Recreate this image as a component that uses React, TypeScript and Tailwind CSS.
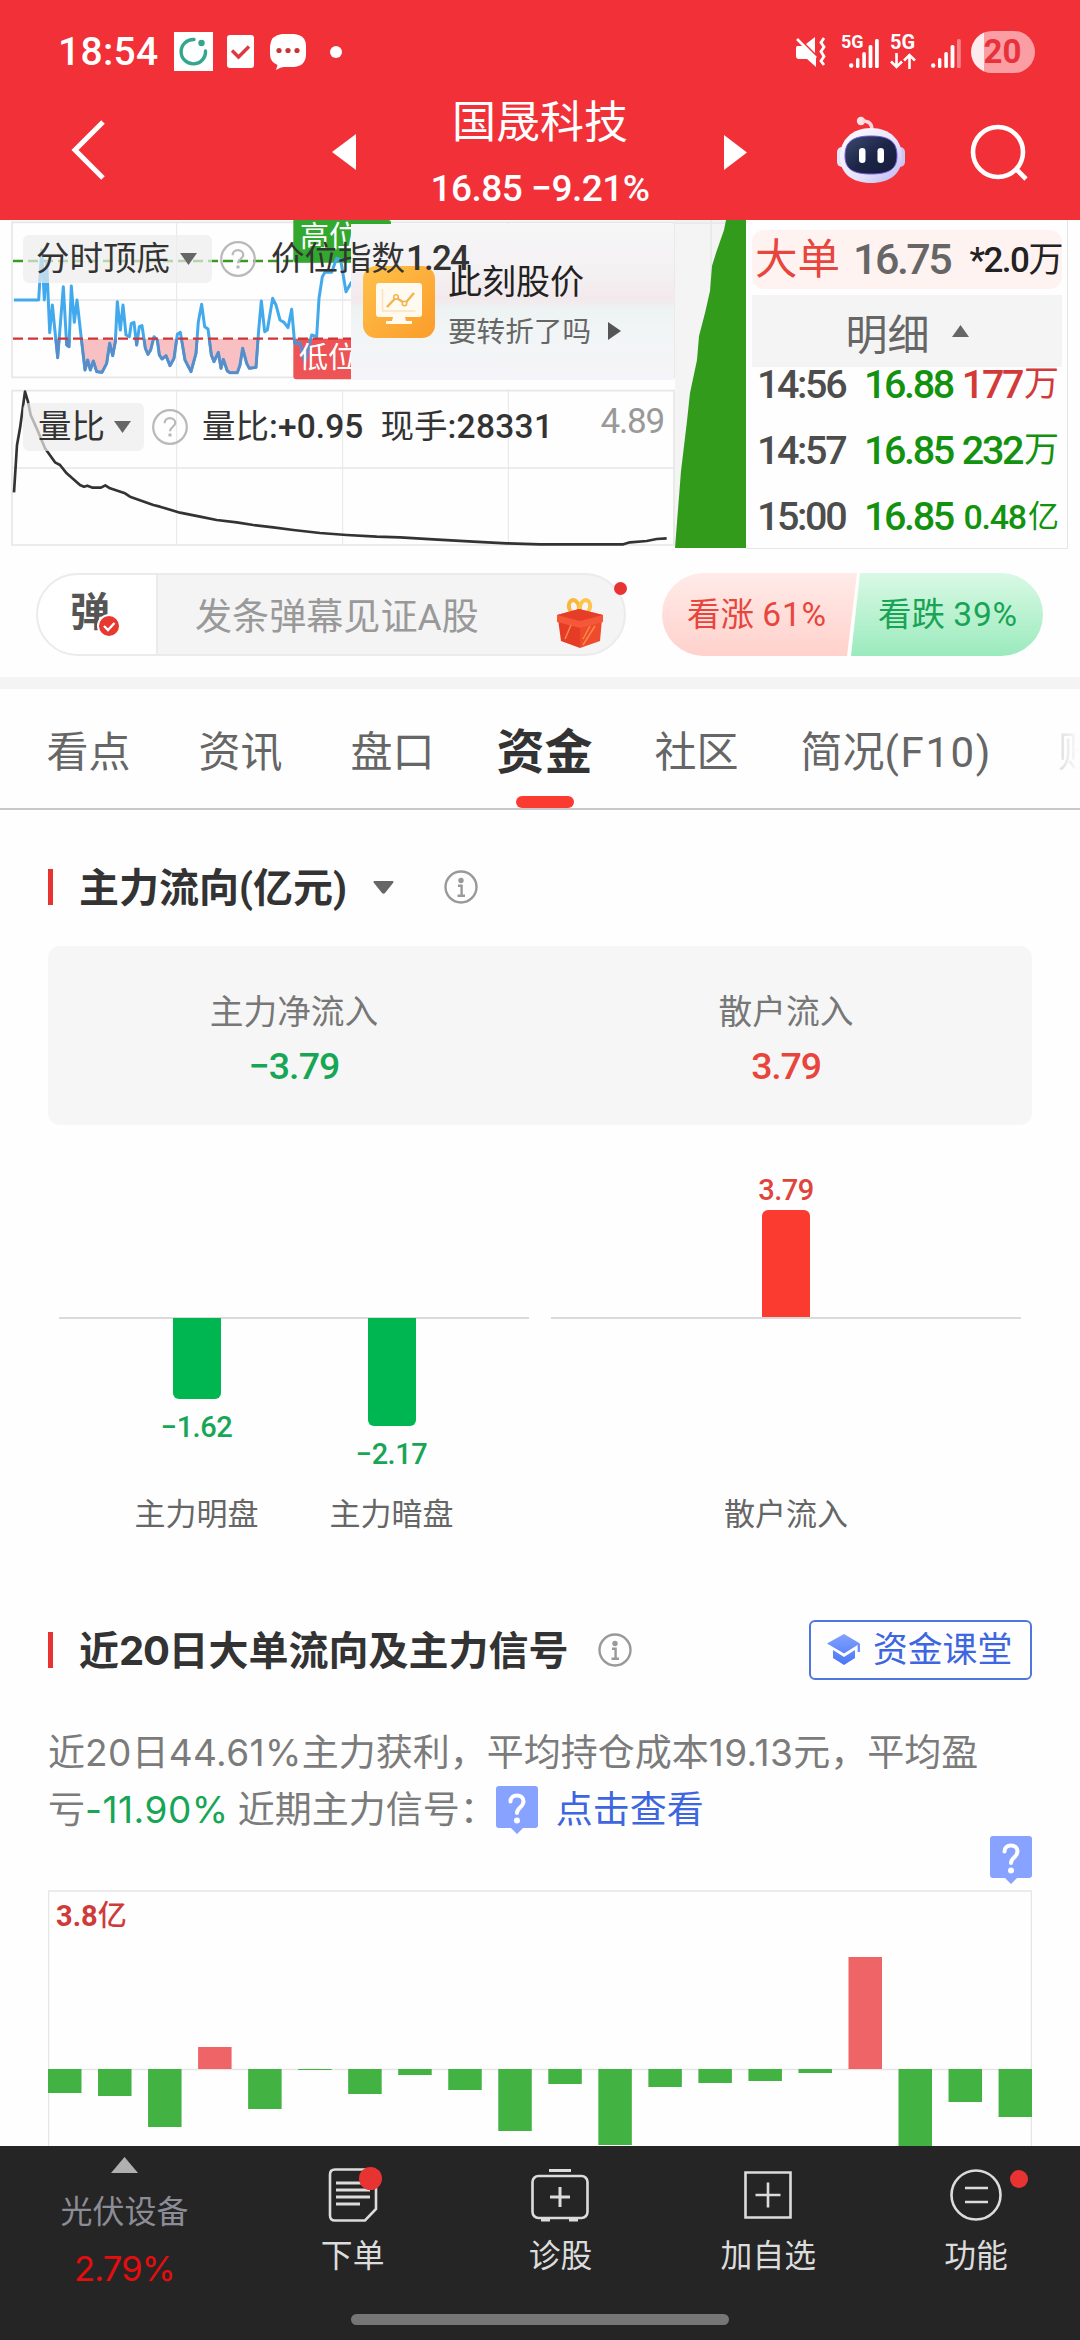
import { clsx } from "clsx";

const indexLine =
  "42,255 116,255 125,105 133,255 140,140 149,353 157,270 173,428 190,215 200,390 207,395 214,213 223,322 231,255 245,380 255,465 263,435 271,465 280,438 290,470 306,472 320,445 329,385 338,422 346,380 352,260 361,345 369,270 378,360 388,365 394,325 402,322 410,390 418,335 426,332 436,400 444,418 452,405 462,365 472,375 478,420 486,432 498,422 510,452 522,430 532,358 541,352 555,435 573,470 588,415 595,320 605,268 614,335 624,342 634,420 642,440 655,412 663,460 670,433 682,468 690,473 712,473 720,450 728,400 740,445 748,460 768,457 776,345 784,258 794,350 802,345 818,250 828,270 840,315 852,322 864,338 875,283 884,385 900,383 915,440 935,360 950,365 957,250 967,185 975,172 995,172 1010,130 1022,135 1038,230 1055,200";

const ratioLine =
  "42,832 51,690 60,640 75,530 84,560 92,600 110,640 135,700 165,742 180,750 200,775 240,810 252,815 262,812 278,818 303,818 316,811 330,820 375,835 390,845 460,870 480,875 540,893 600,905 650,915 710,922 760,930 820,937 880,945 960,954 1040,960 1130,965 1200,967 1300,973 1420,980 1520,985 1620,988 1870,988 1890,982 1940,978 1970,972 2000,970";

const trades = [
  { time: "14:56", price: "16.88", amount: "177万", up: true },
  { time: "14:57", price: "16.85", amount: "232万", up: false },
  { time: "15:00", price: "16.85", amount: "0.48亿", up: false, small: true },
];

// positive = inflow (red), negative = outflow (green)
const flows = [-24, -27, -58, 22, -40, -1, -25, -6, -21, -62, -15, -76, -18, -14, -12, -4, 112, -90, -33, -48];

function QuestionCircle() {
  return (
    <svg width="36" height="36" viewBox="0 0 36 36" fill="none" className="shrink-0">
      <circle cx="18" cy="18" r="16.8" stroke="#b9b9b9" strokeWidth="2.2" />
      <path d="M12.6 14.2c0-3 2.2-5 5.3-5s5.4 1.900 5.400 4.700c0 3.600-5.200 4.200-5.200 8.300" stroke="#b9b9b9" strokeWidth="2.200" />
      <circle cx="18" cy="26" r="1.800" fill="#b9b9b9" />
    </svg>
  );
}

function InfoIcon() {
  return (
    <svg width="34" height="34" viewBox="0 0 34 34" fill="none" className="shrink-0">
      <circle cx="17" cy="17" r="15.500" stroke="#999" strokeWidth="2.400" />
      <circle cx="17" cy="10.500" r="2.700" fill="#999" />
      <path d="M14 15.800h3.600v9.700M13.500 25.700h7.500" stroke="#999" strokeWidth="2.400" />
    </svg>
  );
}

function SignalBubble({ className }: { className?: string }) {
  return (
    <svg width="42" height="48" viewBox="0 0 42 48" fill="none" className={clsx("shrink-0", className)}>
      <path d="M3 0h36q3 0 3 3v36q0 3-3 3H27l-6 6-6-6H3q-3 0-3-3V3q0-3 3-3z" fill="#87a3ff" />
      <path d="M14.500 15.500c0-4 2.800-6 6.500-6s6.500 2.200 6.500 6c0 5.400-6.500 6.300-6.500 11.500" stroke="#fff" strokeWidth="4" strokeLinecap="round" />
      <circle cx="21" cy="34.500" r="3" fill="#fff" />
    </svg>
  );
}

function StatusBar() {
  return (
    <div className="flex h-[94px] items-center pt-[9px] pl-[58px]">
      <span className="w-[116px] text-[39px] leading-[40px] font-medium tracking-[0.3px]">18:54</span>
      <svg width="40" height="40" viewBox="0 0 40 40">
        <path d="M0 0h39v39H0z" fill="#fff" />
        <path d="M20 7.500A12.200 12.200 0 1 0 31.500 19" fill="none" stroke="#35a58d" strokeWidth="3.400" strokeLinecap="round" />
        <circle cx="27.500" cy="11" r="3.200" fill="#35a58d" />
      </svg>
      <svg className="ml-[13px]" width="27" height="33" viewBox="0 0 27 33">
        <rect width="27" height="33" rx="3" fill="#fff" />
        <path d="M5 15.500l6.500 6.500L22 11.500" fill="none" stroke="#dc3a40" strokeWidth="3.400" />
      </svg>
      <svg className="ml-[16px]" width="36" height="36" viewBox="0 0 36 36">
        <path d="M12 0h12q12 1 12 12v8q0 12-12 13H14q-3 0-8 3l1.500-5Q0 28 0 20v-8Q1 1 12 0z" fill="#fff" />
        <circle cx="9" cy="16.500" r="2.600" fill="#c33" />
        <circle cx="18" cy="16.500" r="2.600" fill="#c33" />
        <circle cx="27" cy="16.500" r="2.600" fill="#c33" />
      </svg>
      <span className="ml-[24px] size-[12px] rounded-full bg-white" />

      <svg className="ml-auto" width="32" height="30" viewBox="0 0 32 30" fill="none">
        <path d="M20 0v16l-9-9zM2 9h7l12 12v9l-9-8H4q-3 0-3-3v-7q0-3 1-3z" fill="#fff" />
        <path d="M2 2l19 19" stroke="#fff" strokeWidth="2.600" />
        <path d="M29 1l-3 4.500 3 4.500-3 4.500 3 5-3 4.500 3 4" stroke="#fff" strokeWidth="2.800" />
      </svg>
      <div className="relative ml-[14px] h-[34px] w-[40px]">
        <span className="absolute top-0 left-0 text-[18px] leading-[14px] font-bold">5G</span>
        <SignalBars className="absolute bottom-[1px] left-[8px]" />
      </div>
      <div className="ml-[8px] flex h-[34px] w-[27px] flex-col items-center justify-between">
        <span className="text-[20px] leading-[15px] font-bold">5G</span>
        <svg width="26" height="16" viewBox="0 0 26 16" fill="none" stroke="#fff" strokeWidth="2.600">
          <path d="M6.500 0v14M1 8.500l5.500 5.500 5.500-5.500M19.500 16V2M14 7.500L19.500 2 25 7.500" />
        </svg>
      </div>
      <SignalBars className="mt-[4px] ml-[15px]" weak />
      <div className="mr-[45px] ml-[10px] flex h-[42px] w-[64px] items-center justify-center rounded-full bg-[linear-gradient(90deg,#fdeced_20%,#fa9ea3_20%)] pr-[1px] text-[33px] leading-[42px] font-bold text-[#e8313b]">
        20
      </div>
    </div>
  );
}

function SignalBars({ className, weak }: { className?: string; weak?: boolean }) {
  return (
    <svg className={className} width="30" height="29" viewBox="0 0 30 29" fill="#fff">
      <circle cx="2.200" cy="26.500" r="2.200" />
      <rect x="7" y="19" width="3.400" height="10" rx="1.500" />
      <rect x="13.300" y="13" width="3.600" height="16" rx="1.500" />
      <rect x="19.600" y="6" width="3.800" height="23" rx="1.500" />
      <rect x="26" y="0" width="3.800" height="29" rx="1.500" opacity={weak ? 0.4 : 1} />
    </svg>
  );
}

function Robot() {
  return (
    <svg width="70" height="68" viewBox="0 0 70 68">
      <defs>
        <linearGradient id="shell" x1="0" y1="0" x2="1" y2="1">
          <stop offset="0" stopColor="#fff" />
          <stop offset="0.600" stopColor="#e6e2fb" />
          <stop offset="1" stopColor="#b9b4ee" />
        </linearGradient>
        <linearGradient id="visor" x1="0" y1="0" x2="1" y2="1">
          <stop offset="0" stopColor="#3c4a70" />
          <stop offset="0.500" stopColor="#1d2648" />
          <stop offset="1" stopColor="#151b3a" />
        </linearGradient>
      </defs>
      <circle cx="25" cy="5" r="4.200" fill="#fde3e8" />
      <path d="M27 5q9 0 9 9" fill="none" stroke="#fbd5dc" strokeWidth="3.500" />
      <rect x="1" y="31" width="10" height="20" rx="5" fill="#e4e3fa" />
      <rect x="59" y="31" width="10" height="20" rx="5" fill="#c9c7f2" />
      <path d="M35 12c19 0 31 12 31 29S53 67 35 67 4 58 4 41s12-29 31-29z" fill="url(#shell)" />
      <path d="M35 20c20 0 26 7 26 20s-8 18-26 18S9 53 9 40s6-20 26-20z" fill="url(#visor)" stroke="#6f5be0" strokeWidth="1" />
      <rect x="23" y="32" width="6.500" height="15" rx="3.200" fill="#fff" />
      <rect x="41.500" y="32" width="6.500" height="15" rx="3.200" fill="#fff" />
    </svg>
  );
}

function Header() {
  return (
    <header className="h-[220px] shrink-0 bg-[#f23038] text-white">
      <StatusBar />
      <div className="flex">
        <div className="flex h-[112px] w-[434px] items-center justify-between pr-[78px] pl-[71px]">
          <svg width="36" height="62" viewBox="0 0 36 62" fill="none" stroke="#fff" strokeWidth="5">
            <path d="M32 3L4 31l28 28" />
          </svg>
          <svg className="mt-[4px]" width="24" height="36" viewBox="0 0 24 36" fill="#fff">
            <path d="M24 0v36L0 18z" />
          </svg>
        </div>
        <div className="flex w-[212px] flex-col items-center whitespace-nowrap">
          <h1 className="text-[44px] leading-[58px]">国晟科技</h1>
          <div className="mt-[9px] text-[37px] leading-[56px] font-medium tracking-[-0.500px]">16.85 −9.21%</div>
        </div>
        <div className="flex h-[112px] flex-1 items-center pl-[78px]">
          <svg className="mt-[4px]" width="23" height="35" viewBox="0 0 23 35" fill="#fff">
            <path d="M0 0v35l23-17.500z" />
          </svg>
          <div className="ml-[89px]">
            <Robot />
          </div>
          <svg className="mt-[5px] ml-[64px]" width="58" height="58" viewBox="0 0 58 58" fill="none" stroke="#fff" strokeWidth="4.600">
            <circle cx="28" cy="28" r="25" />
            <path d="M46 45l10 10" />
          </svg>
        </div>
      </div>
    </header>
  );
}

function LeftCharts() {
  return (
    <div className="relative h-[329px] w-[675px] shrink-0">
      {/* drawn in 1/3 px units, origin 5px above the panel */}
      <svg className="absolute -top-[5px] left-0" width="675" height="334" viewBox="0 0 2025 1002" fill="none">
        <defs>
          <clipPath id="low">
            <rect x="0" y="371" width="1060" height="120" />
          </clipPath>
        </defs>
        <g stroke="#e6e6e6" strokeWidth="5">
          <path d="M36 22H2022V487H36zM36 255H2022M36 527H2022V990H36zM36 759H2022" />
          <path d="M530 22V487M1028 22V487M1525 22V487M530 527V990M1028 527V990M1525 527V990" strokeWidth="3" />
        </g>
        <g clipPath="url(#low)">
          <polygon points={`42,371 ${indexLine} 1055,371`} fill="#f8c0c2" />
        </g>
        <path d="M39 138H1055" stroke="#3a9a1e" strokeWidth="7" strokeDasharray="30 15" />
        <path d="M880 15h285q8 0 8 8v120H888q-8 0-8-8z" fill="#32a82e" />
        <path d="M880 371h293v122H890q-10 0-10-10z" fill="#ee5355" />
        <polyline points={indexLine} stroke="#42aaec" strokeWidth="9" strokeLinejoin="round" />
        <g clipPath="url(#low)">
          <polyline points={indexLine} stroke="#5a8cc8" strokeWidth="8" strokeLinejoin="round" />
        </g>
        <path d="M39 371H1055" stroke="#d03535" strokeWidth="7" strokeDasharray="30 15" />
        <polyline points={ratioLine} stroke="#333" strokeWidth="8" strokeLinejoin="round" />
      </svg>
      <span className="absolute top-[-3px] left-[300px] text-[29px] leading-[40px] text-white">高位</span>
      <span className="absolute top-[118px] left-[299px] text-[29px] leading-[40px] text-white">低位</span>

      <div className="absolute top-[4px] left-[351px] flex h-[156px] w-[323px] bg-[linear-gradient(180deg,#f6f6f7_0%,#f4f1f3_30%,#f3e9ec_48%,#edf2f3_54%,#f1f5f6_68%,#f6f4f8_100%)] pt-[42px] pl-[12px]">
        <svg width="72" height="72" viewBox="0 0 72 72" fill="none">
          <defs>
            <linearGradient id="promo" x1="0" y1="0" x2="1" y2="1">
              <stop offset="0" stopColor="#ffc24a" />
              <stop offset="1" stopColor="#fb9c2c" />
            </linearGradient>
          </defs>
          <rect width="72" height="72" rx="13" fill="url(#promo)" />
          <rect x="13" y="17" width="46" height="34" rx="3" fill="#fffaf0" />
          <path d="M30 51h12l1 4h6v3H23v-3h6z" fill="#fffaf0" />
          <path d="M19.500 23v22h33" stroke="#fbe3bd" strokeWidth="1.500" />
          <path d="M24 41l9-9.500 9 6L51 27" stroke="#f2b44c" strokeWidth="2.400" />
          <circle cx="33" cy="31" r="2.200" fill="#fff" stroke="#f2b44c" strokeWidth="1.600" />
          <circle cx="41.500" cy="37.500" r="2.200" fill="#fff" stroke="#f2b44c" strokeWidth="1.600" />
        </svg>
        <div className="-mt-[5px] ml-[13px] text-[#222]">
          <div className="text-[34px] leading-[42px]">此刻股价</div>
          <div className="mt-[8px] flex items-center gap-[17px] text-[28.600px] leading-[42px] text-[#666]">
            要转折了吗
            <svg className="-mt-[3px]" width="13" height="18" viewBox="0 0 13 18" fill="#555">
              <path d="M0 0l13 9-13 9z" />
            </svg>
          </div>
        </div>
      </div>

      <div className="relative flex h-full flex-col pl-[23px] text-[33.500px] leading-[48px] whitespace-nowrap text-[#333]">
        <div className="mt-[15px] flex h-[48px] items-center">
          <div className="flex h-[48px] w-[189px] items-center rounded-[6px] bg-[#ececec]/70 pl-[13px]">
            分时顶底
            <svg className="ml-[10px]" width="17" height="12" viewBox="0 0 17 12" fill="#666">
              <path d="M0 0h17l-8.500 12z" />
            </svg>
          </div>
          <div className="mr-[15px] ml-[8px]">
            <QuestionCircle />
          </div>
          价位指数<span className="ml-[1px] text-[35px] font-medium tracking-[-1.800px]">1.24</span>
        </div>
        <div className="mt-[120px] flex h-[48px] items-center">
          <div className="flex h-[48px] w-[121px] items-center rounded-[6px] bg-[#ececec]/70 pl-[15px]">
            量比
            <svg className="ml-[9px]" width="17" height="12" viewBox="0 0 17 12" fill="#666">
              <path d="M0 0h17l-8.500 12z" />
            </svg>
          </div>
          <div className="mr-[14px] ml-[8px]">
            <QuestionCircle />
          </div>
          量比<span className="font-medium tracking-[0.100px]">:+0.95</span>
          <span className="ml-[17px]">现手</span>
          <span className="font-medium tracking-[0.300px]">:28331</span>
          <span className="mr-[11px] mb-[11px] ml-auto text-[35px] text-[#999] tracking-[-1.200px]">4.89</span>
        </div>
      </div>
    </div>
  );
}

function QuotePanel() {
  return (
    <section className="flex h-[329px] shrink-0">
      <LeftCharts />
      <svg width="71" height="328" viewBox="0 0 71 328" className="shrink-0">
        <path d="M0 0h71v328H0z" fill="#f4f4f4" />
        <path d="M0 3h71M36 0v328" stroke="#e6e6e6" strokeWidth="1.500" />
        <path d="M51 0L49 10 41 33 37 46 35 71 30 93 24 116 22 140 15 173 12 201 6 251 0 328H71V0z" fill="#329b1b" />
      </svg>
      <div className="flex w-[322px] flex-col border-r border-b border-[#e6e6e6] pt-[10px] pl-[6px]">
        <div className="flex h-[59px] w-[310px] shrink-0 items-center rounded-[12px] bg-[#fff3f2] pl-[3px] leading-[59px] whitespace-nowrap">
          <span className="text-[42.500px] text-[#e8453c]">大单</span>
          <span className="ml-[13px] w-[101px] text-[43px] font-medium tracking-[-2.500px] text-[#666]">16.75</span>
          <span className="ml-auto pt-[2px] text-[35px] tracking-[-1.500px] text-[#222]">
            <span className="font-medium">*2.0</span>万
          </span>
        </div>
        <div className="mt-[6px] flex h-[72px] w-[310px] shrink-0 items-center justify-center bg-[#f4f4f4] pt-[9px] text-[42px] leading-[60px] text-[#666]">
          明细
          <svg className="-mt-[9px] ml-[22px]" width="17" height="12" viewBox="0 0 17 12" fill="#666">
            <path d="M0 12h17L8.500 0z" />
          </svg>
        </div>
        <div className="-mt-[15px]">
          {trades.map((t) => (
            <div key={t.time} className="flex h-[66px] w-[307px] items-center pl-[5px] text-[39.500px] leading-[66px] font-medium tracking-[-2.400px] text-[#4d4d4d]">
              <span className="w-[107px]">{t.time}</span>
              <span className="text-[#13920f]">{t.price}</span>
              <span
                className={clsx(
                  "ml-auto flex items-center",
                  t.up ? "text-[#d23a3a]" : "text-[#13920f]",
                  t.small && "text-[34px] tracking-[-1.200px]"
                )}
              >
                {t.amount.slice(0, -1)}
                <span className={clsx("ml-[2px] font-normal tracking-normal", t.small ? "text-[31px]" : "text-[35px]")}>{t.amount.slice(-1)}</span>
              </span>
            </div>
          ))}
        </div>
      </div>
    </section>
  );
}

function DanmuBar() {
  return (
    <section className="flex h-[128px] shrink-0 items-start pt-[24px] pl-[36px]">
      <div className="relative flex h-[83px] w-[590px] items-center overflow-visible rounded-full border-2 border-[#ebebeb] bg-[linear-gradient(90deg,#fff_120px,#f4f4f4_120px)]">
        <div className="relative h-full w-[120px] border-r-2 border-[#ebebeb]">
          <span className="absolute top-[15px] left-[32px] text-[40px] leading-[46px] font-bold text-[#555]">弹</span>
          <svg className="absolute top-[39px] left-[59px]" width="24" height="24" viewBox="0 0 24 24" fill="none">
            <circle cx="12" cy="12" r="11" fill="#e8382f" stroke="#fff" strokeWidth="2" />
            <path d="M7 12l4 4 6.500-7" stroke="#fff" strokeWidth="2.400" />
          </svg>
        </div>
        <span className="mt-[7px] ml-[37px] text-[37.100px] leading-[50px] whitespace-nowrap text-[#999]">发条弹幕见证A股</span>
        <svg className="absolute top-[22px] left-[517px]" width="50" height="52" viewBox="0 0 50 52" fill="none">
          <ellipse cx="19" cy="10" rx="5" ry="7" stroke="#f8b83a" strokeWidth="4" transform="rotate(-15 19 10)" />
          <ellipse cx="30" cy="10" rx="5" ry="7" stroke="#fbc64e" strokeWidth="4" transform="rotate(15 30 10)" />
          <path d="M3 22l22 6v23L6 44z" fill="#e63b25" />
          <path d="M47 22l-22 6v23l20-7z" fill="#ef4a2c" />
          <path d="M2 18l22-6 24 6v7l-23 6-23-6z" fill="#f5573a" />
          <path d="M2 18l23 6 23-6-24-6z" fill="#e63d28" />
          <path d="M28 48l12-19M28 42l7-13M10 42l6-14" stroke="#f98a4a" strokeWidth="1.500" />
        </svg>
        <span className="absolute top-[7px] left-[576px] size-[13px] rounded-full bg-[#e83333]" />
      </div>
      <div className="ml-[36px] flex h-[83px] w-[381px] overflow-hidden rounded-full text-[33.500px] leading-[83px] whitespace-nowrap">
        <div className="w-[199px] bg-linear-to-b from-[#ffebe8] to-[#ffd1cc] pl-[25px] text-[#e8453c] [clip-path:polygon(0_0,195px_0,185px_100%,0_100%)]">
          看涨 <span className="tracking-[0.800px]">61%</span>
        </div>
        <div className="-ml-[10px] flex-1 bg-linear-to-b from-[#d9f9e5] to-[#9aeabd] pl-[27px] text-[#18a455] [clip-path:polygon(9px_0,100%_0,100%_100%,0_100%)]">
          看跌 <span className="tracking-[0.800px]">39%</span>
        </div>
      </div>
    </section>
  );
}

function Tabs() {
  return (
    <nav className="flex h-[121px] shrink-0 items-center gap-[68px] overflow-hidden border-b-2 border-[#c9c9c9] pt-[9px] pl-[46.500px] text-[42px] leading-[60px] whitespace-nowrap text-[#666]">
      <span>看点</span>
      <span>资讯</span>
      <span>盘口</span>
      <span className="relative -mx-[6px] text-[48px] font-bold text-[#333]">
        资金
        <span className="absolute top-[73px] left-[19px] h-[12px] w-[58px] rounded-full bg-[#fc3b30]" />
      </span>
      <span>社区</span>
      <span className="-ml-[6px]">
        简况<span className="tracking-[1.600px]">(F10)</span>
      </span>
      <span className="-ml-[2px] w-[24px] overflow-hidden text-[#dcdcdc] [mask-image:linear-gradient(90deg,#000_0,transparent_22px)]">账</span>
    </nav>
  );
}

function SectionTitle({ children }: { children: React.ReactNode }) {
  return (
    <>
      <span className="h-[36px] w-[5px] bg-[#e83333]" />
      <h2 className="mt-[4px] ml-[26px] text-[40px] leading-[56px] font-bold whitespace-nowrap text-[#333]">{children}</h2>
    </>
  );
}

function FlowBars() {
  return (
    <div className="flex gap-[22px] px-[11px] text-[29px] leading-[34px] font-medium">
      <div className="w-[470px]">
        <div className="h-[194px] border-b-2 border-[#dadada]" />
        <div className="flex h-[178px] px-[40px] text-[#17a655]">
          <div className="flex flex-1 flex-col items-center">
            <span className="-mt-px h-[81px] w-[48px] rounded-b-[6px] bg-[#00b650]" />
            <span className="mt-[11px] tracking-[-0.500px]">−1.62</span>
          </div>
          <div className="flex flex-1 flex-col items-center">
            <span className="-mt-px h-[108px] w-[48px] rounded-b-[6px] bg-[#00b650]" />
            <span className="mt-[11px] tracking-[-0.500px]">−2.17</span>
          </div>
        </div>
        <div className="flex px-[40px] text-center text-[31px] leading-[36px] font-normal text-[#666]">
          <span className="flex-1">主力明盘</span>
          <span className="flex-1">主力暗盘</span>
        </div>
      </div>
      <div className="w-[470px]">
        <div className="flex h-[194px] flex-col items-center justify-end border-b-2 border-[#dadada] text-[#e0443b]">
          <span className="mb-[3px] tracking-[-0.500px]">3.79</span>
          <span className="h-[107px] w-[48px] rounded-t-[6px] bg-[#fc3b30]" />
        </div>
        <div className="h-[178px]" />
        <div className="text-center text-[31px] leading-[36px] font-normal text-[#666]">散户流入</div>
      </div>
    </div>
  );
}

function MainFlow() {
  return (
    <section className="shrink-0 px-[48px] pt-[58px]">
      <div className="flex h-[38px] items-center">
        <SectionTitle>主力流向(亿元)</SectionTitle>
        <svg className="ml-[26px]" width="21" height="13" viewBox="0 0 21 13" fill="#666">
          <path d="M1 0h19q1 1 0 2l-8 10q-1.500 1.500-3 0L1 2q-1-1 0-2z" />
        </svg>
        <div className="ml-[50px]">
          <InfoIcon />
        </div>
      </div>
      <div className="mt-[40px] grid h-[179px] grid-cols-2 rounded-[12px] bg-[#f6f6f6] pt-[42px] text-center">
        <div>
          <div className="text-[33.700px] leading-[50px] text-[#777]">主力净流入</div>
          <div className="mt-[3px] text-[37.500px] leading-[50px] font-medium tracking-[-0.900px] text-[#17a655]">−3.79</div>
        </div>
        <div>
          <div className="text-[33.700px] leading-[50px] text-[#777]">散户流入</div>
          <div className="mt-[3px] text-[37.500px] leading-[50px] font-medium tracking-[-1.200px] text-[#e8453c]">3.79</div>
        </div>
      </div>
      <FlowBars />
    </section>
  );
}

function RecentFlow() {
  return (
    <section className="h-[613px] shrink-0 overflow-hidden px-[48px] pt-[87px]">
      <div className="flex h-[59px] items-center">
        <SectionTitle>
          近<span className="font-['Inter'] tracking-[-1.300px]">20</span>日大单流向及主力信号
        </SectionTitle>
        <div className="ml-[29px]">
          <InfoIcon />
        </div>
        <div className="ml-auto flex h-[60px] w-[223px] items-center rounded-[6px] border-2 border-[#5076de] pl-[16px] text-[34.800px] leading-[56px] whitespace-nowrap text-[#3d66e0]">
          <svg className="mr-[12px]" width="34" height="31" viewBox="0 0 34 31" fill="none">
            <defs>
              <linearGradient id="cap" x1="0" y1="0" x2="0" y2="1">
                <stop offset="0" stopColor="#82a2ff" />
                <stop offset="1" stopColor="#4a76f5" />
              </linearGradient>
            </defs>
            <path d="M17 0l16 9.500-16 10L0 9.500zM6 16l11 7 11-7v8l-11 7-11-7z" fill="url(#cap)" />
            <path d="M31.800 10v8" stroke="#6d92ff" strokeWidth="2.400" />
          </svg>
          资金课堂
        </div>
      </div>
      <p className="mt-[45px] font-['Inter','Noto_Sans_CJK_SC',sans-serif] text-[37px] leading-[57px] whitespace-nowrap text-[#7b7b7b]">
        近<span className="tracking-[0.400px]">20</span>日<span className="tracking-[0.400px]">44.61%</span>主力获利，平均持仓成本
        <span className="tracking-[0.400px]">19.13</span>元，平均盈
        <br />
        亏<span className="tracking-[0.500px] text-[#17a655]">-11.90%</span>
        <span className="ml-[9px]">近期主力信号：</span>
        <SignalBubble className="relative -top-[3px] ml-[-1px] inline-block" />
        <span className="ml-[18px] text-[#3d66e0]">点击查看</span>
      </p>
      <div className="-mt-[2px] flex justify-end">
        <SignalBubble />
      </div>
      <div className="relative mt-[6px]">
        <svg width="984" height="256" viewBox="0 0 984 256">
          <path d="M.5 256V1h983v255M0 179.500h984" fill="none" stroke="#e6e6e6" strokeWidth="1.500" />
          {flows.map((v, i) => (
            <rect
              key={i}
              x={i * 50.03}
              y={v > 0 ? 179 - v : 179}
              width="33.500"
              height={Math.abs(v)}
              fill={v > 0 ? "#ef6466" : "#42b342"}
            />
          ))}
        </svg>
        <span className="absolute top-[6px] left-[8px] text-[29px] leading-[40px] font-bold text-[#cf3b3b]">
          3.8<span className="font-medium">亿</span>
        </span>
      </div>
    </section>
  );
}

function NavItem({ label, children }: { label: string; children: React.ReactNode }) {
  return (
    <div className="flex w-[208px] flex-col items-center pt-[20px]">
      <div className="relative flex h-[58px] items-center">{children}</div>
      <span className="mt-[10px] text-[31.800px] leading-[44px] text-[#dcdcdc]">{label}</span>
    </div>
  );
}

function BottomNav() {
  return (
    <footer className="h-[194px] shrink-0 bg-[#252525]">
      <div className="flex h-[168px]">
        <div className="flex w-[249px] flex-col items-center pt-[11px]">
          <svg width="27" height="16" viewBox="0 0 27 16" fill="#b0b0b0">
            <path d="M13.500 0L27 16H0z" />
          </svg>
          <span className="mt-[17px] text-[32px] leading-[44px] text-[#8c8c96]">光伏设备</span>
          <span className="mt-[13px] font-['Inter'] text-[34.500px] leading-[44px] tracking-[-0.800px] text-[#e50d0d]">2.79%</span>
        </div>
        <NavItem label="下单">
          <svg width="50" height="54" viewBox="0 0 50 54" fill="none" stroke="#dcdcdc" strokeWidth="2.600">
            <path d="M7 1.500h36q5 0 5 5V41L37 52.500H7q-5 0-5-5v-41q0-5 5-5z" />
            <path d="M8 15h34M8 22h34M8 29h34M8 36h24" strokeWidth="3" />
          </svg>
          <span className="absolute top-[1px] left-[31px] size-[23px] rounded-full bg-[#e83333]" />
        </NavItem>
        <NavItem label="诊股">
          <svg width="58" height="54" viewBox="0 0 58 54" fill="none" stroke="#dcdcdc" strokeWidth="2.600">
            <path d="M18 2.500h22" strokeWidth="3" />
            <rect x="1.500" y="8" width="55" height="42" rx="6" />
            <path d="M29 19v20M19 29h20M10 52h9M38 52h9" strokeWidth="3" />
          </svg>
        </NavItem>
        <NavItem label="加自选">
          <svg width="48" height="48" viewBox="0 0 48 48" fill="none" stroke="#dcdcdc" strokeWidth="2.600">
            <path d="M1.500 1.500h45v45h-45zM24 11.500v25M11.500 24h25" />
          </svg>
        </NavItem>
        <NavItem label="功能">
          <svg width="52" height="52" viewBox="0 0 52 52" fill="none" stroke="#dcdcdc" strokeWidth="2.600">
            <circle cx="26" cy="26" r="24.500" />
            <path d="M15 19h23M15 33h23" />
          </svg>
          <span className="absolute top-[4px] left-[60px] size-[18px] rounded-full bg-[#e83333]" />
        </NavItem>
      </div>
      <div className="mx-auto h-[11px] w-[378px] rounded-full bg-[#767676]" />
    </footer>
  );
}

export default function App() {
  return (
    <div className="flex h-[2340px] w-[1080px] flex-col overflow-hidden bg-[#fefefe] font-['Roboto','Noto_Sans_CJK_SC',sans-serif]">
      <Header />
      <QuotePanel />
      <DanmuBar />
      <div className="h-[12px] shrink-0 bg-[#f4f4f4]" />
      <Tabs />
      <MainFlow />
      <RecentFlow />
      <BottomNav />
    </div>
  );
}
